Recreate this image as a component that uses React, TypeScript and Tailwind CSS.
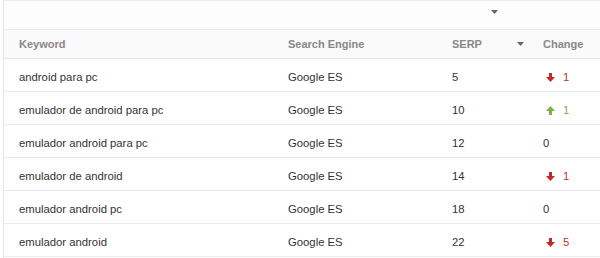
import React from "react";

type Row = { kw: string; serp: string; change: number };

const rows: Row[] = [
  { kw: "android para pc", serp: "5", change: -1 },
  { kw: "emulador de android para pc", serp: "10", change: 1 },
  { kw: "emulador android para pc", serp: "12", change: 0 },
  { kw: "emulador de android", serp: "14", change: -1 },
  { kw: "emulador android pc", serp: "18", change: 0 },
  { kw: "emulador android", serp: "22", change: -5 },
];

function Caret() {
  return (
    <svg width="7" height="4" viewBox="0 0 7 4" className="block">
      <path d="M0 0 H7 L3.5 4 Z" fill="#666" />
    </svg>
  );
}

function DownArrow() {
  return (
    <svg width="9" height="9" viewBox="0 0 9 9" className="block">
      <path d="M3 0 H6 V4 H9 L4.5 9 L0 4 H3 Z" fill="#c62828" />
    </svg>
  );
}

function UpArrow() {
  return (
    <svg width="9" height="9" viewBox="0 0 9 9" className="block">
      <path d="M4.5 0 L9 5 H6 V9 H3 V5 H0 Z" fill="#7cb342" />
    </svg>
  );
}

function ChangeCell({ v }: { v: number }) {
  if (v === 0) return <span className="text-[#333]">0</span>;
  if (v < 0)
    return (
      <span className="flex items-center">
        <span className="ml-[3px] mr-[8px]"><DownArrow /></span>
        <span className="text-[#c0392b]">{Math.abs(v)}</span>
      </span>
    );
  return (
    <span className="flex items-center">
      <span className="ml-[3px] mr-[8px]"><UpArrow /></span>
      <span className="text-[#7cb342]">{v}</span>
    </span>
  );
}

export default function App() {
  return (
    <div
      className="w-[600px] h-[258px] bg-white overflow-hidden"
      style={{ fontFamily: '"Liberation Sans", Arial, Helvetica, sans-serif' }}
    >
      <div className="ml-[3px] border-l border-[#e6e6e6] h-full">
        <div className="h-[30px] border-t border-b border-[#ebebeb] bg-[#fdfdfd] flex justify-end pr-[102px] pt-[9px]">
          <Caret />
        </div>
        <div className="h-[29px] border-b border-[#e6e6e6] bg-[#fafafa] flex items-center text-[11px] font-bold text-[#888]">
          <div className="w-[284px] pl-[15px]">Keyword</div>
          <div className="w-[164px]">Search Engine</div>
          <div className="w-[91px] flex items-center justify-between pr-[19px]">
            <span>SERP</span>
            <Caret />
          </div>
          <div>Change</div>
        </div>
        {rows.map((r) => (
          <div
            key={r.kw}
            className="h-[33px] pt-[5px] border-b border-[#ebebeb] flex items-center text-[11.3px] text-[#333]"
          >
            <div className="w-[284px] pl-[15px]">{r.kw}</div>
            <div className="w-[164px]">Google ES</div>
            <div className="w-[91px]">{r.serp}</div>
            <div>
              <ChangeCell v={r.change} />
            </div>
          </div>
        ))}
      </div>
    </div>
  );
}
